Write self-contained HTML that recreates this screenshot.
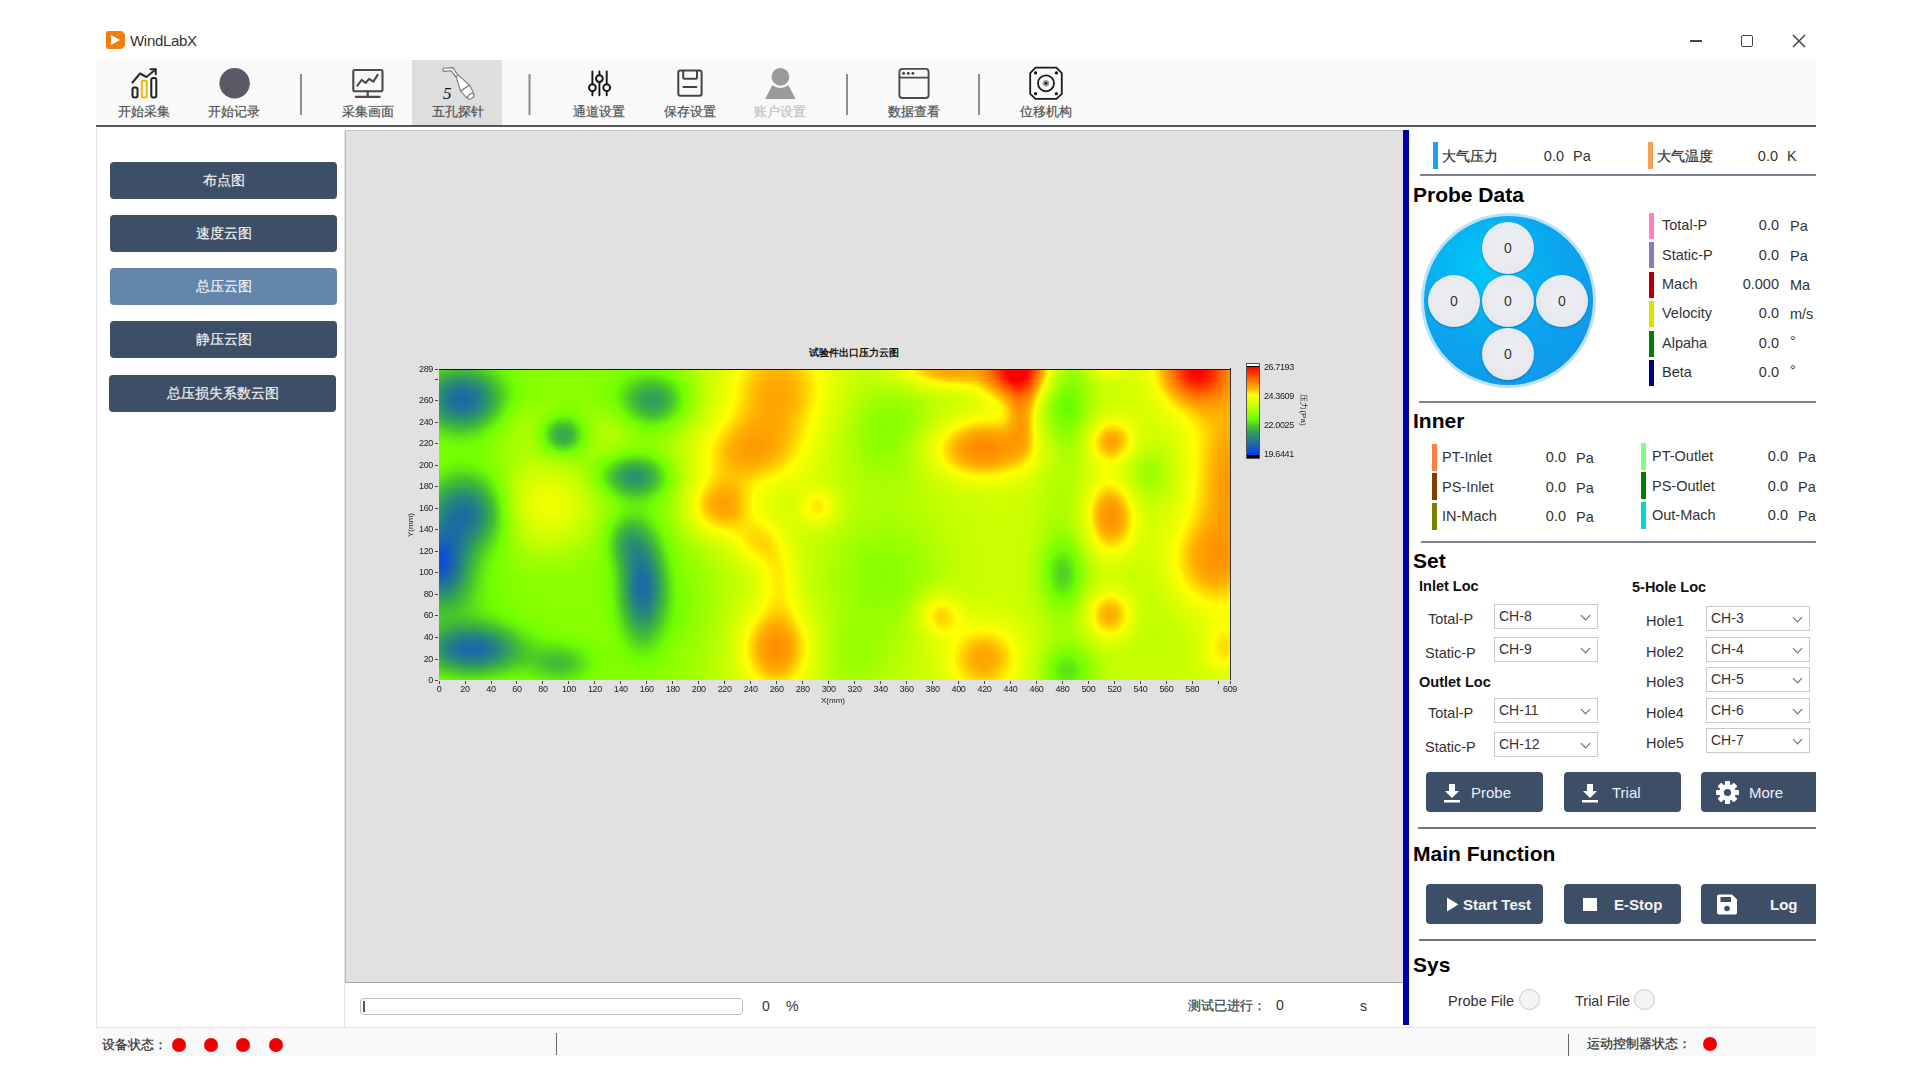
<!DOCTYPE html>
<html><head><meta charset="utf-8">
<style>
*{box-sizing:border-box;margin:0;padding:0}
html,body{width:1920px;height:1080px;overflow:hidden;background:#fff;font-family:"Liberation Sans",sans-serif;color:#222}
.a{position:absolute}
.t{position:absolute;white-space:nowrap;line-height:1}
#win{position:absolute;left:96px;top:24px;width:1720px;height:1032px;background:#fff}
#toolbar{position:absolute;left:96px;top:60px;width:1720px;height:65px;background:#f9f9f9}
#tbline{position:absolute;left:96px;top:125px;width:1720px;height:2px;background:#555}
.tbtxt{position:absolute;top:104.2px;font-size:13px;color:#555;white-space:nowrap;line-height:16px;-webkit-text-stroke:0.25px}
.sep{position:absolute;top:74px;width:2px;height:41px;background:#8a8a8a}
.lbtn{position:absolute;left:110px;width:227px;height:37px;background:#3d4f66;border-radius:4px;color:#f0f0f0;font-size:13.5px;text-align:center;line-height:37px;-webkit-text-stroke:0.2px}
.hdr{position:absolute;font-weight:bold;font-size:21px;color:#000;white-space:nowrap;line-height:1}
.rtxt{position:absolute;font-size:14px;color:#333;white-space:nowrap;line-height:16px}
.bar{position:absolute;width:5px}
.div{position:absolute;height:2px;background:#6e7480}
.combo{position:absolute;width:104px;height:25px;border:1px solid #c9c9c9;background:#fff;font-size:14px;color:#333;line-height:23px;padding-left:4px}
.combo:after{content:"";position:absolute;right:8px;top:7px;width:6px;height:6px;border-right:1.3px solid #666;border-bottom:1.3px solid #666;transform:rotate(45deg)}
.dbtn{position:absolute;height:40px;background:#3d4f66;border-radius:4px;color:#f2f2f2;font-size:15px}
.dot{position:absolute;width:14px;height:14px;border-radius:50%;background:#f00000}
.hole{position:absolute;width:52px;height:52px;border-radius:50%;background:radial-gradient(circle at 50% 45%,#eef0f5 0%,#e6e8ee 70%,#d8dce4 100%);box-shadow:0 1px 2px rgba(0,40,90,.35);font-size:14px;color:#333;text-align:center;line-height:52px}
</style></head><body>
<div id="win"></div>
<!-- title -->
<div class="a" style="left:106px;top:31px;width:19px;height:18px;background:#f07f10;border-radius:2px 5px 5px 2px"></div>
<div class="a" style="left:111px;top:35px;width:0;height:0;border-left:9px solid #fff;border-top:5px solid transparent;border-bottom:5px solid transparent"></div>
<div class="t" style="left:130px;top:33px;font-size:15px;letter-spacing:-0.3px;color:#333">WindLabX</div>
<div class="a" style="left:1690px;top:40px;width:12px;height:2px;background:#444"></div>
<div class="a" style="left:1741px;top:35px;width:12px;height:12px;border:1.6px solid #444;border-radius:2px"></div>
<svg class="a" style="left:1792px;top:34px" width="14" height="14"><path d="M1 1L13 13M13 1L1 13" stroke="#444" stroke-width="1.5"/></svg>

<div id="toolbar"></div>
<div class="a" style="left:412px;top:60px;width:90px;height:65px;background:#dedede"></div>
<div id="tbline"></div>
<!--TB--><svg class="a" style="left:0;top:0" width="1920" height="130" viewBox="0 0 1920 130">
<g fill="none" stroke-linecap="round" stroke-linejoin="round">
<!-- chart icon -->
<rect x="132.5" y="87.5" width="5" height="10" rx="2" stroke="#222" stroke-width="2"/>
<rect x="141.8" y="80.8" width="5" height="16.7" rx="1" stroke="#f5b800" stroke-width="2"/>
<rect x="151.3" y="78" width="5" height="19.5" rx="2" stroke="#222" stroke-width="2"/>
<path d="M132.5 82.5L140 73.5L146.4 77L155.5 69.5" stroke="#2a2a2a" stroke-width="2"/>
<path d="M150.5 69.3H155.8V74.3" stroke="#2a2a2a" stroke-width="2"/>
<!-- monitor -->
<rect x="353.3" y="70" width="29.2" height="21.2" rx="1.5" stroke="#4a4a4a" stroke-width="2.1"/>
<path d="M357.4 85.6L361.7 79.8L365.6 83L369.1 78.8L373.4 81.6L377.6 74.9" stroke="#4a4a4a" stroke-width="2"/>
<path d="M367.7 91.5V96.5M355.7 96.8H379.6" stroke="#4a4a4a" stroke-width="2.2"/>
<!-- sliders -->
<g stroke="#151515" stroke-width="1.9">
<path d="M592.4 71.5V84.3M592.4 91.1V95.2M599.4 71.5V75.2M599.4 82V95.2M606.7 71.5V84.3M606.7 91.1V95.2"/>
<circle cx="592.4" cy="87.7" r="3.4"/><circle cx="599.4" cy="78.6" r="3.4"/><circle cx="606.7" cy="87.7" r="3.4"/>
</g>
<!-- save -->
<g stroke="#444" stroke-width="2">
<rect x="678.3" y="70.6" width="23.3" height="25.1" rx="2"/>
<path d="M683.2 71V77.3Q683.2 78.8 684.7 78.8H695.5Q697 78.8 697 77.3V71"/>
<path d="M683.4 87H696.3"/>
</g>
<!-- window -->
<g stroke="#4a4a4a" stroke-width="1.9">
<rect x="899.4" y="68.9" width="29.2" height="29.1" rx="3"/>
<path d="M899.6 77.6H928.4"/>
</g>
<g fill="#4a4a4a"><circle cx="903.6" cy="73.3" r="1.5"/><circle cx="908.3" cy="73.3" r="1.5"/><circle cx="912.9" cy="73.3" r="1.5"/></g>
<!-- motor -->
<g stroke="#1a1a1a" stroke-width="1.8">
<path d="M1035.6 67.7H1056.4L1061.8 73.1V93.9L1056.4 98.9H1035.6L1030.2 93.9V73.1Z"/>
<circle cx="1046" cy="83.3" r="8"/>
</g>
<circle cx="1046" cy="83.3" r="3.2" fill="#999"/>
<g fill="#111"><circle cx="1046" cy="83.3" r="1.3"/><circle cx="1035.6" cy="72.9" r="1.6"/><circle cx="1056.4" cy="72.9" r="1.6"/><circle cx="1035.6" cy="93.7" r="1.6"/><circle cx="1056.4" cy="93.7" r="1.6"/></g>
</g>
<!-- record -->
<circle cx="234.6" cy="83.3" r="15.2" fill="#5a5966"/>
<!-- user -->
<circle cx="780.4" cy="76.8" r="8.9" fill="#9a9a9a"/>
<path d="M772.2 85.3Q780.4 90.5 788.4 85.3L795.6 99H765.2Z" fill="#9a9a9a"/>
<!-- probe -->
<g stroke="#7a7a7a" stroke-width="1.1" fill="#fff" stroke-linejoin="round">
<path d="M443.5 68.2Q442 69.8 443.6 71.4L451.3 70.8L456 77.2L458.3 75.8L452.8 67.6Z"/>
<path d="M456 76.6L458.6 75.2L469.5 85.3L460.6 91Z"/>
<path d="M460.6 91L469.5 85.3L473.5 92.8L466.5 97.6Z"/>
<ellipse cx="470.8" cy="96.3" rx="3.6" ry="2.2" transform="rotate(-35 470.8 96.3)"/>
</g>
<text x="443" y="98.5" font-family="Liberation Serif" font-style="italic" font-size="17" fill="#111">5</text>
<!-- separators -->
<g fill="#8c8c8c"><rect x="300" y="74" width="2" height="41"/><rect x="528.5" y="74" width="2" height="41"/><rect x="846" y="74" width="2" height="41"/><rect x="978" y="74" width="2" height="41"/></g>
</svg>
<div class="tbtxt" style="left:104px;width:80px;text-align:center">开始采集</div>
<div class="tbtxt" style="left:194px;width:80px;text-align:center">开始记录</div>
<div class="tbtxt" style="left:328px;width:80px;text-align:center">采集画面</div>
<div class="tbtxt" style="left:418px;width:80px;text-align:center">五孔探针</div>
<div class="tbtxt" style="left:559px;width:80px;text-align:center">通道设置</div>
<div class="tbtxt" style="left:650px;width:80px;text-align:center">保存设置</div>
<div class="tbtxt" style="left:740px;width:80px;text-align:center;color:#c4c4c4">账户设置</div>
<div class="tbtxt" style="left:874px;width:80px;text-align:center">数据查看</div>
<div class="tbtxt" style="left:1006px;width:80px;text-align:center">位移机构</div>
<!--/TB-->

<!-- left panel -->
<div class="a" style="left:96px;top:127px;width:1px;height:900px;background:#e6e6e6"></div>
<div class="a" style="left:344px;top:131px;width:1px;height:896px;background:#e4e4e4"></div>
<div class="lbtn" style="top:162px">布点图</div>
<div class="lbtn" style="top:215px">速度云图</div>
<div class="lbtn" style="top:268px;background:#6586ab">总压云图</div>
<div class="lbtn" style="top:321px">静压云图</div>
<div class="lbtn" style="top:375px;left:109px">总压损失系数云图</div>

<!-- center -->
<div class="a" style="left:345px;top:130px;width:1058px;height:853px;background:#e1e1e1;border-left:1px solid #b8b8b8;border-top:1px solid #c4c4c4;border-bottom:1px solid #a8a8a8"></div>
<!--CHART--><div id="chart">
<div class="t" style="left:754px;width:200px;top:348px;text-align:center;font-size:10.3px;font-weight:bold;color:#111">试验件出口压力云图</div>
<canvas id="hm" width="791" height="311" class="a" style="left:439px;top:369px;background:linear-gradient(to right,#4aa868 0%,#80ff00 25%,#c8ff00 45%,#e8ff00 70%,#ffb000 100%)"></canvas>
<div class="a" style="left:439px;top:369px;width:792px;height:1px;background:#111"></div>
<div class="a" style="left:1230px;top:368px;width:1px;height:312px;background:#333"></div>
<div class="a" style="left:435px;top:680.0px;width:3px;height:1px;background:#444"></div>
<div class="t" style="left:380px;width:53px;text-align:right;top:676.0px;font-size:9px;letter-spacing:-0.35px;color:#222">0</div>
<div class="a" style="left:435px;top:658.5px;width:3px;height:1px;background:#444"></div>
<div class="t" style="left:380px;width:53px;text-align:right;top:654.5px;font-size:9px;letter-spacing:-0.35px;color:#222">20</div>
<div class="a" style="left:435px;top:637.0px;width:3px;height:1px;background:#444"></div>
<div class="t" style="left:380px;width:53px;text-align:right;top:633.0px;font-size:9px;letter-spacing:-0.35px;color:#222">40</div>
<div class="a" style="left:435px;top:615.4px;width:3px;height:1px;background:#444"></div>
<div class="t" style="left:380px;width:53px;text-align:right;top:611.4px;font-size:9px;letter-spacing:-0.35px;color:#222">60</div>
<div class="a" style="left:435px;top:593.9px;width:3px;height:1px;background:#444"></div>
<div class="t" style="left:380px;width:53px;text-align:right;top:589.9px;font-size:9px;letter-spacing:-0.35px;color:#222">80</div>
<div class="a" style="left:435px;top:572.4px;width:3px;height:1px;background:#444"></div>
<div class="t" style="left:380px;width:53px;text-align:right;top:568.4px;font-size:9px;letter-spacing:-0.35px;color:#222">100</div>
<div class="a" style="left:435px;top:550.9px;width:3px;height:1px;background:#444"></div>
<div class="t" style="left:380px;width:53px;text-align:right;top:546.9px;font-size:9px;letter-spacing:-0.35px;color:#222">120</div>
<div class="a" style="left:435px;top:529.3px;width:3px;height:1px;background:#444"></div>
<div class="t" style="left:380px;width:53px;text-align:right;top:525.3px;font-size:9px;letter-spacing:-0.35px;color:#222">140</div>
<div class="a" style="left:435px;top:507.8px;width:3px;height:1px;background:#444"></div>
<div class="t" style="left:380px;width:53px;text-align:right;top:503.8px;font-size:9px;letter-spacing:-0.35px;color:#222">160</div>
<div class="a" style="left:435px;top:486.3px;width:3px;height:1px;background:#444"></div>
<div class="t" style="left:380px;width:53px;text-align:right;top:482.3px;font-size:9px;letter-spacing:-0.35px;color:#222">180</div>
<div class="a" style="left:435px;top:464.8px;width:3px;height:1px;background:#444"></div>
<div class="t" style="left:380px;width:53px;text-align:right;top:460.8px;font-size:9px;letter-spacing:-0.35px;color:#222">200</div>
<div class="a" style="left:435px;top:443.3px;width:3px;height:1px;background:#444"></div>
<div class="t" style="left:380px;width:53px;text-align:right;top:439.3px;font-size:9px;letter-spacing:-0.35px;color:#222">220</div>
<div class="a" style="left:435px;top:421.7px;width:3px;height:1px;background:#444"></div>
<div class="t" style="left:380px;width:53px;text-align:right;top:417.7px;font-size:9px;letter-spacing:-0.35px;color:#222">240</div>
<div class="a" style="left:435px;top:400.2px;width:3px;height:1px;background:#444"></div>
<div class="t" style="left:380px;width:53px;text-align:right;top:396.2px;font-size:9px;letter-spacing:-0.35px;color:#222">260</div>
<div class="a" style="left:435px;top:378.7px;width:3px;height:1px;background:#444"></div>
<div class="a" style="left:435px;top:369.0px;width:3px;height:1px;background:#444"></div>
<div class="t" style="left:380px;width:53px;text-align:right;top:365.0px;font-size:9px;letter-spacing:-0.35px;color:#222">289</div>
<div class="a" style="left:438.5px;top:681px;width:1px;height:3px;background:#444"></div>
<div class="t" style="left:419.0px;width:40px;text-align:center;top:685px;font-size:9px;letter-spacing:-0.35px;color:#222">0</div>
<div class="a" style="left:464.5px;top:681px;width:1px;height:3px;background:#444"></div>
<div class="t" style="left:445.0px;width:40px;text-align:center;top:685px;font-size:9px;letter-spacing:-0.35px;color:#222">20</div>
<div class="a" style="left:490.5px;top:681px;width:1px;height:3px;background:#444"></div>
<div class="t" style="left:471.0px;width:40px;text-align:center;top:685px;font-size:9px;letter-spacing:-0.35px;color:#222">40</div>
<div class="a" style="left:516.4px;top:681px;width:1px;height:3px;background:#444"></div>
<div class="t" style="left:496.9px;width:40px;text-align:center;top:685px;font-size:9px;letter-spacing:-0.35px;color:#222">60</div>
<div class="a" style="left:542.4px;top:681px;width:1px;height:3px;background:#444"></div>
<div class="t" style="left:522.9px;width:40px;text-align:center;top:685px;font-size:9px;letter-spacing:-0.35px;color:#222">80</div>
<div class="a" style="left:568.4px;top:681px;width:1px;height:3px;background:#444"></div>
<div class="t" style="left:548.9px;width:40px;text-align:center;top:685px;font-size:9px;letter-spacing:-0.35px;color:#222">100</div>
<div class="a" style="left:594.4px;top:681px;width:1px;height:3px;background:#444"></div>
<div class="t" style="left:574.9px;width:40px;text-align:center;top:685px;font-size:9px;letter-spacing:-0.35px;color:#222">120</div>
<div class="a" style="left:620.3px;top:681px;width:1px;height:3px;background:#444"></div>
<div class="t" style="left:600.8px;width:40px;text-align:center;top:685px;font-size:9px;letter-spacing:-0.35px;color:#222">140</div>
<div class="a" style="left:646.3px;top:681px;width:1px;height:3px;background:#444"></div>
<div class="t" style="left:626.8px;width:40px;text-align:center;top:685px;font-size:9px;letter-spacing:-0.35px;color:#222">160</div>
<div class="a" style="left:672.3px;top:681px;width:1px;height:3px;background:#444"></div>
<div class="t" style="left:652.8px;width:40px;text-align:center;top:685px;font-size:9px;letter-spacing:-0.35px;color:#222">180</div>
<div class="a" style="left:698.3px;top:681px;width:1px;height:3px;background:#444"></div>
<div class="t" style="left:678.8px;width:40px;text-align:center;top:685px;font-size:9px;letter-spacing:-0.35px;color:#222">200</div>
<div class="a" style="left:724.2px;top:681px;width:1px;height:3px;background:#444"></div>
<div class="t" style="left:704.7px;width:40px;text-align:center;top:685px;font-size:9px;letter-spacing:-0.35px;color:#222">220</div>
<div class="a" style="left:750.2px;top:681px;width:1px;height:3px;background:#444"></div>
<div class="t" style="left:730.7px;width:40px;text-align:center;top:685px;font-size:9px;letter-spacing:-0.35px;color:#222">240</div>
<div class="a" style="left:776.2px;top:681px;width:1px;height:3px;background:#444"></div>
<div class="t" style="left:756.7px;width:40px;text-align:center;top:685px;font-size:9px;letter-spacing:-0.35px;color:#222">260</div>
<div class="a" style="left:802.2px;top:681px;width:1px;height:3px;background:#444"></div>
<div class="t" style="left:782.7px;width:40px;text-align:center;top:685px;font-size:9px;letter-spacing:-0.35px;color:#222">280</div>
<div class="a" style="left:828.2px;top:681px;width:1px;height:3px;background:#444"></div>
<div class="t" style="left:808.7px;width:40px;text-align:center;top:685px;font-size:9px;letter-spacing:-0.35px;color:#222">300</div>
<div class="a" style="left:854.1px;top:681px;width:1px;height:3px;background:#444"></div>
<div class="t" style="left:834.6px;width:40px;text-align:center;top:685px;font-size:9px;letter-spacing:-0.35px;color:#222">320</div>
<div class="a" style="left:880.1px;top:681px;width:1px;height:3px;background:#444"></div>
<div class="t" style="left:860.6px;width:40px;text-align:center;top:685px;font-size:9px;letter-spacing:-0.35px;color:#222">340</div>
<div class="a" style="left:906.1px;top:681px;width:1px;height:3px;background:#444"></div>
<div class="t" style="left:886.6px;width:40px;text-align:center;top:685px;font-size:9px;letter-spacing:-0.35px;color:#222">360</div>
<div class="a" style="left:932.1px;top:681px;width:1px;height:3px;background:#444"></div>
<div class="t" style="left:912.6px;width:40px;text-align:center;top:685px;font-size:9px;letter-spacing:-0.35px;color:#222">380</div>
<div class="a" style="left:958.0px;top:681px;width:1px;height:3px;background:#444"></div>
<div class="t" style="left:938.5px;width:40px;text-align:center;top:685px;font-size:9px;letter-spacing:-0.35px;color:#222">400</div>
<div class="a" style="left:984.0px;top:681px;width:1px;height:3px;background:#444"></div>
<div class="t" style="left:964.5px;width:40px;text-align:center;top:685px;font-size:9px;letter-spacing:-0.35px;color:#222">420</div>
<div class="a" style="left:1010.0px;top:681px;width:1px;height:3px;background:#444"></div>
<div class="t" style="left:990.5px;width:40px;text-align:center;top:685px;font-size:9px;letter-spacing:-0.35px;color:#222">440</div>
<div class="a" style="left:1036.0px;top:681px;width:1px;height:3px;background:#444"></div>
<div class="t" style="left:1016.5px;width:40px;text-align:center;top:685px;font-size:9px;letter-spacing:-0.35px;color:#222">460</div>
<div class="a" style="left:1061.9px;top:681px;width:1px;height:3px;background:#444"></div>
<div class="t" style="left:1042.4px;width:40px;text-align:center;top:685px;font-size:9px;letter-spacing:-0.35px;color:#222">480</div>
<div class="a" style="left:1087.9px;top:681px;width:1px;height:3px;background:#444"></div>
<div class="t" style="left:1068.4px;width:40px;text-align:center;top:685px;font-size:9px;letter-spacing:-0.35px;color:#222">500</div>
<div class="a" style="left:1113.9px;top:681px;width:1px;height:3px;background:#444"></div>
<div class="t" style="left:1094.4px;width:40px;text-align:center;top:685px;font-size:9px;letter-spacing:-0.35px;color:#222">520</div>
<div class="a" style="left:1139.9px;top:681px;width:1px;height:3px;background:#444"></div>
<div class="t" style="left:1120.4px;width:40px;text-align:center;top:685px;font-size:9px;letter-spacing:-0.35px;color:#222">540</div>
<div class="a" style="left:1165.9px;top:681px;width:1px;height:3px;background:#444"></div>
<div class="t" style="left:1146.4px;width:40px;text-align:center;top:685px;font-size:9px;letter-spacing:-0.35px;color:#222">560</div>
<div class="a" style="left:1191.8px;top:681px;width:1px;height:3px;background:#444"></div>
<div class="t" style="left:1172.3px;width:40px;text-align:center;top:685px;font-size:9px;letter-spacing:-0.35px;color:#222">580</div>
<div class="a" style="left:1217.8px;top:681px;width:1px;height:3px;background:#444"></div>
<div class="a" style="left:1229.5px;top:681px;width:1px;height:3px;background:#444"></div>
<div class="t" style="left:1210.0px;width:40px;text-align:center;top:685px;font-size:9px;letter-spacing:-0.35px;color:#222">609</div>
<div class="t" style="left:821px;top:697px;font-size:8px;color:#222">X(mm)</div>
<div class="t" style="left:389px;top:521px;font-size:8px;color:#222;transform:rotate(-90deg);transform-origin:22px 4px;width:44px;text-align:center">Y(mm)</div>
<div class="a" style="left:1246px;top:363px;width:14px;height:96px;border:1px solid #555;background:#000"></div>
<div class="a" style="left:1247px;top:364px;width:12px;height:2px;background:#fff"></div>
<div class="a" style="left:1247px;top:367px;width:12px;height:88px;background:linear-gradient(to bottom,#ff0000 0%,#ff6a00 14%,#ffb000 24%,#ffff00 32%,#c0ff00 46%,#70ff00 59%,#44c030 68%,#2a8f70 78%,#1a66aa 89%,#0036ff 100%)"></div>
<div class="t" style="left:1264px;top:362.7px;font-size:9px;letter-spacing:-0.4px;color:#222">26.7193</div>
<div class="t" style="left:1264px;top:392.2px;font-size:9px;letter-spacing:-0.4px;color:#222">24.3609</div>
<div class="t" style="left:1264px;top:420.5px;font-size:9px;letter-spacing:-0.4px;color:#222">22.0025</div>
<div class="t" style="left:1264px;top:449.9px;font-size:9px;letter-spacing:-0.4px;color:#222">19.6441</div>
<div class="t" style="left:1283px;top:406px;font-size:8px;color:#222;transform:rotate(90deg);transform-origin:20px 4px;width:40px;text-align:center">压力(Pa)</div>
</div>
<script>
(function(){
var W=791,H=311;
var c=document.getElementById('hm');var ctx=c.getContext('2d');
var img=ctx.createImageData(W,H);var d=img.data;
var stops=[[0,0,54,255],[0.11,26,102,170],[0.22,42,143,112],[0.32,68,192,48],[0.41,112,255,0],[0.54,192,255,0],[0.68,255,255,0],[0.76,255,176,0],[0.87,255,106,0],[1,255,0,0]];
// blobs: x,y,sx,sy,amp
var B=[
[23,30,28,22,-0.33],[123,66,15,13,-0.22],[214,31,24,18,-0.22],[195,107,24,15,-0.24],
[28,143,28,26,-0.31],[0,195,20,26,-0.34],[203,216,16,38,-0.32],[185,170,14,18,-0.12],[33,280,34,17,-0.32],[121,294,22,14,-0.13],[20,230,30,30,-0.06],
[106,136,34,30,0.23],[86,58,25,20,0.06],[170,65,20,20,0.07],
[337,22,38,40,0.24],[303,84,38,24,0.22],[279,137,22,20,0.29],[318,172,18,18,0.15],[340,208,14,26,0.13],[337,279,24,28,0.31],[379,138,13,13,0.16],
[578,0,24,22,0.36],[583,45,10,25,0.2],[505,0,32,13,0.26],[541,79,36,20,0.33],[672,72,16,15,0.25],[671,147,17,26,0.31],[670,245,16,17,0.28],[668,0,12,6,0.12],
[500,245,15,15,0.2],[544,289,26,24,0.24],[758,0,30,28,0.27],[785,110,28,75,0.21],[792,110,12,40,0.06],[768,195,30,30,0.19],[785,279,15,18,0.14],
[626,32,18,30,-0.14],[623,204,16,24,-0.16],[628,302,20,18,-0.16],[708,105,20,20,-0.10],[624,150,20,150,-0.06],
[450,62,40,40,-0.13],[445,205,45,45,-0.12],[414,290,30,30,-0.08],[245,235,30,40,-0.05],[700,240,50,50,-0.04]
];
var K=0.36;var HOT=[[578,2,18,16,0.18],[756,2,20,18,0.18]];
function base(x,y){
 var s=1/(1+Math.exp(-(x-260)/25));
 return 0.45+0.12*s;
}
for(var y=0;y<H;y++){for(var x=0;x<W;x++){
 var v=base(x,y);var neg=0;var ps=0;
 for(var k=0;k<B.length;k++){var b=B[k];var dx=(x-b[0])/b[2],dy=(y-b[1])/b[3];var e=dx*dx+dy*dy;if(e<14){var g=b[4]*Math.exp(-0.5*e);if(g<0)neg+=g;else ps+=g;}}
 var pos=K*Math.tanh(ps/K);
 v+=neg+pos;
 for(var h=0;h<HOT.length;h++){var q=HOT[h];var ex=(x-q[0])/q[2],ey=(y-q[1])/q[3];v+=q[4]*Math.exp(-0.5*(ex*ex+ey*ey));}
 if(v<0)v=0;if(v>1)v=1;
 var i=1;while(i<stops.length-1&&stops[i][0]<v)i++;
 var a=stops[i-1],bb=stops[i];var f=(v-a[0])/(bb[0]-a[0]);if(f<0)f=0;if(f>1)f=1;
 var p=(y*W+x)*4;
 d[p]=a[1]+(bb[1]-a[1])*f;d[p+1]=a[2]+(bb[2]-a[2])*f;d[p+2]=a[3]+(bb[3]-a[3])*f;d[p+3]=255;
}}
ctx.putImageData(img,0,0);
})();
</script>
<!--/CHART-->


<!-- progress -->
<div class="a" style="left:360px;top:998px;width:383px;height:17px;border:1.5px solid #bcbcbc;border-radius:4px;background:#fff"></div>
<div class="a" style="left:363px;top:1001px;width:2px;height:11px;background:#555"></div>
<div class="t" style="left:762px;top:999px;font-size:14px;color:#333">0</div>
<div class="t" style="left:786px;top:999px;font-size:14px;color:#333">%</div>
<div class="t" style="left:1188px;top:1000px;font-size:12.5px;color:#444;-webkit-text-stroke:0.25px">测试已进行：</div>
<div class="t" style="left:1276px;top:998px;font-size:14px;color:#333">0</div>
<div class="t" style="left:1360px;top:999px;font-size:14px;color:#333">s</div>

<!-- blue line -->
<div class="a" style="left:1403px;top:130px;width:6px;height:895px;background:#0000a8"></div>

<!--RIGHT--><div class="a" style="left:1433px;top:142px;width:5px;height:27px;background:#1aa3e8;"></div>
<div class="t" style="left:1442px;top:150.2px;font-size:13.5px;line-height:13.5px;color:#333;-webkit-text-stroke:0.25px">大气压力</div>
<div class="t" style="left:1464px;width:100px;text-align:right;top:148.8px;font-size:14.5px;line-height:14.5px;color:#333;">0.0</div>
<div class="t" style="left:1573px;top:148.8px;font-size:14.5px;line-height:14.5px;color:#333;">Pa</div>
<div class="a" style="left:1648px;top:142px;width:5px;height:27px;background:#f5a050;"></div>
<div class="t" style="left:1657px;top:150.2px;font-size:13.5px;line-height:13.5px;color:#333;-webkit-text-stroke:0.25px">大气温度</div>
<div class="t" style="left:1678px;width:100px;text-align:right;top:148.8px;font-size:14.5px;line-height:14.5px;color:#333;">0.0</div>
<div class="t" style="left:1787px;top:148.8px;font-size:14.5px;line-height:14.5px;color:#333;">K</div>
<div class="a" style="left:1420px;top:174px;width:396px;height:2px;background:#7c8290;"></div>
<div class="hdr" style="left:1413px;top:184px">Probe Data</div>
<div class="a" style="left:1649px;top:213px;width:5px;height:26px;background:#ff80c0;"></div>
<div class="t" style="left:1662px;top:218.2px;font-size:14.5px;line-height:14.5px;color:#333;">Total-P</div>
<div class="t" style="left:1679px;width:100px;text-align:right;top:218.2px;font-size:14.5px;line-height:14.5px;color:#333;">0.0</div>
<div class="t" style="left:1790px;top:219.2px;font-size:14.5px;line-height:14.5px;color:#333;">Pa</div>
<div class="a" style="left:1649px;top:242px;width:5px;height:26px;background:#8080c0;"></div>
<div class="t" style="left:1662px;top:247.7px;font-size:14.5px;line-height:14.5px;color:#333;">Static-P</div>
<div class="t" style="left:1679px;width:100px;text-align:right;top:247.7px;font-size:14.5px;line-height:14.5px;color:#333;">0.0</div>
<div class="t" style="left:1790px;top:248.7px;font-size:14.5px;line-height:14.5px;color:#333;">Pa</div>
<div class="a" style="left:1649px;top:272px;width:5px;height:26px;background:#b00000;"></div>
<div class="t" style="left:1662px;top:277.1px;font-size:14.5px;line-height:14.5px;color:#333;">Mach</div>
<div class="t" style="left:1679px;width:100px;text-align:right;top:277.1px;font-size:14.5px;line-height:14.5px;color:#333;">0.000</div>
<div class="t" style="left:1790px;top:278.1px;font-size:14.5px;line-height:14.5px;color:#333;">Ma</div>
<div class="a" style="left:1649px;top:301px;width:5px;height:26px;background:#e0e000;"></div>
<div class="t" style="left:1662px;top:306.4px;font-size:14.5px;line-height:14.5px;color:#333;">Velocity</div>
<div class="t" style="left:1679px;width:100px;text-align:right;top:306.4px;font-size:14.5px;line-height:14.5px;color:#333;">0.0</div>
<div class="t" style="left:1790px;top:307.4px;font-size:14.5px;line-height:14.5px;color:#333;">m/s</div>
<div class="a" style="left:1649px;top:331px;width:5px;height:26px;background:#008000;"></div>
<div class="t" style="left:1662px;top:335.9px;font-size:14.5px;line-height:14.5px;color:#333;">Alpaha</div>
<div class="t" style="left:1679px;width:100px;text-align:right;top:335.9px;font-size:14.5px;line-height:14.5px;color:#333;">0.0</div>
<div class="t" style="left:1790px;top:333.9px;font-size:14.5px;line-height:14.5px;color:#333;">°</div>
<div class="a" style="left:1649px;top:360px;width:5px;height:26px;background:#000080;"></div>
<div class="t" style="left:1662px;top:365.2px;font-size:14.5px;line-height:14.5px;color:#333;">Beta</div>
<div class="t" style="left:1679px;width:100px;text-align:right;top:365.2px;font-size:14.5px;line-height:14.5px;color:#333;">0.0</div>
<div class="t" style="left:1790px;top:363.2px;font-size:14.5px;line-height:14.5px;color:#333;">°</div>
<div class="a" style="left:1419px;top:401px;width:397px;height:2px;background:#7c8290;"></div>
<div class="a" style="left:1421px;top:213px;width:175px;height:175px;border-radius:50%;background:#b9e2f8"></div>
<div class="a" style="left:1424px;top:216px;width:169px;height:169px;border-radius:50%;background:radial-gradient(circle at 35% 30%,#00c8f8 0%,#0aa6ee 45%,#1590e8 100%)"></div>
<div class="hole" style="left:1482px;top:222px">0</div>
<div class="hole" style="left:1428px;top:275px">0</div>
<div class="hole" style="left:1482px;top:275px">0</div>
<div class="hole" style="left:1536px;top:275px">0</div>
<div class="hole" style="left:1482px;top:328px">0</div>
<div class="hdr" style="left:1413px;top:410px">Inner</div>
<div class="a" style="left:1432px;top:444px;width:5px;height:27px;background:#ff8040;"></div>
<div class="t" style="left:1442px;top:450.2px;font-size:14.5px;line-height:14.5px;color:#333;">PT-Inlet</div>
<div class="t" style="left:1466px;width:100px;text-align:right;top:450.2px;font-size:14.5px;line-height:14.5px;color:#333;">0.0</div>
<div class="t" style="left:1576px;top:451.2px;font-size:14.5px;line-height:14.5px;color:#333;">Pa</div>
<div class="a" style="left:1432px;top:473px;width:5px;height:27px;background:#804000;"></div>
<div class="t" style="left:1442px;top:479.6px;font-size:14.5px;line-height:14.5px;color:#333;">PS-Inlet</div>
<div class="t" style="left:1466px;width:100px;text-align:right;top:479.6px;font-size:14.5px;line-height:14.5px;color:#333;">0.0</div>
<div class="t" style="left:1576px;top:480.6px;font-size:14.5px;line-height:14.5px;color:#333;">Pa</div>
<div class="a" style="left:1432px;top:503px;width:5px;height:27px;background:#808000;"></div>
<div class="t" style="left:1442px;top:508.9px;font-size:14.5px;line-height:14.5px;color:#333;">IN-Mach</div>
<div class="t" style="left:1466px;width:100px;text-align:right;top:508.9px;font-size:14.5px;line-height:14.5px;color:#333;">0.0</div>
<div class="t" style="left:1576px;top:509.9px;font-size:14.5px;line-height:14.5px;color:#333;">Pa</div>
<div class="a" style="left:1641px;top:443px;width:5px;height:27px;background:#80ff80;"></div>
<div class="t" style="left:1652px;top:449.2px;font-size:14.5px;line-height:14.5px;color:#333;">PT-Outlet</div>
<div class="t" style="left:1688px;width:100px;text-align:right;top:449.2px;font-size:14.5px;line-height:14.5px;color:#333;">0.0</div>
<div class="t" style="left:1798px;top:450.2px;font-size:14.5px;line-height:14.5px;color:#333;">Pa</div>
<div class="a" style="left:1641px;top:472px;width:5px;height:27px;background:#008000;"></div>
<div class="t" style="left:1652px;top:478.6px;font-size:14.5px;line-height:14.5px;color:#333;">PS-Outlet</div>
<div class="t" style="left:1688px;width:100px;text-align:right;top:478.6px;font-size:14.5px;line-height:14.5px;color:#333;">0.0</div>
<div class="t" style="left:1798px;top:479.6px;font-size:14.5px;line-height:14.5px;color:#333;">Pa</div>
<div class="a" style="left:1641px;top:502px;width:5px;height:27px;background:#00d8d8;"></div>
<div class="t" style="left:1652px;top:507.9px;font-size:14.5px;line-height:14.5px;color:#333;">Out-Mach</div>
<div class="t" style="left:1688px;width:100px;text-align:right;top:507.9px;font-size:14.5px;line-height:14.5px;color:#333;">0.0</div>
<div class="t" style="left:1798px;top:508.9px;font-size:14.5px;line-height:14.5px;color:#333;">Pa</div>
<div class="a" style="left:1421px;top:541px;width:395px;height:2px;background:#7c8290;"></div>
<div class="hdr" style="left:1413px;top:550px">Set</div>
<div class="t" style="left:1419px;top:578.8px;font-size:14.5px;line-height:14.5px;color:#111;font-weight:bold">Inlet Loc</div>
<div class="t" style="left:1632px;top:579.8px;font-size:14.5px;line-height:14.5px;color:#111;font-weight:bold">5-Hole Loc</div>
<div class="t" style="left:1428px;top:611.8px;font-size:14.5px;line-height:14.5px;color:#333;">Total-P</div>
<div class="t" style="left:1425px;top:645.8px;font-size:14.5px;line-height:14.5px;color:#333;">Static-P</div>
<div class="combo" style="left:1494px;top:604px">CH-8</div>
<div class="combo" style="left:1494px;top:637px">CH-9</div>
<div class="t" style="left:1419px;top:674.8px;font-size:14.5px;line-height:14.5px;color:#111;font-weight:bold">Outlet Loc</div>
<div class="t" style="left:1428px;top:705.8px;font-size:14.5px;line-height:14.5px;color:#333;">Total-P</div>
<div class="t" style="left:1425px;top:739.8px;font-size:14.5px;line-height:14.5px;color:#333;">Static-P</div>
<div class="combo" style="left:1494px;top:698px">CH-11</div>
<div class="combo" style="left:1494px;top:732px">CH-12</div>
<div class="t" style="left:1646px;top:614.2px;font-size:14.5px;line-height:14.5px;color:#333;">Hole1</div>
<div class="combo" style="left:1706px;top:606px">CH-3</div>
<div class="t" style="left:1646px;top:644.8px;font-size:14.5px;line-height:14.5px;color:#333;">Hole2</div>
<div class="combo" style="left:1706px;top:637px">CH-4</div>
<div class="t" style="left:1646px;top:675.2px;font-size:14.5px;line-height:14.5px;color:#333;">Hole3</div>
<div class="combo" style="left:1706px;top:667px">CH-5</div>
<div class="t" style="left:1646px;top:705.8px;font-size:14.5px;line-height:14.5px;color:#333;">Hole4</div>
<div class="combo" style="left:1706px;top:698px">CH-6</div>
<div class="t" style="left:1646px;top:736.2px;font-size:14.5px;line-height:14.5px;color:#333;">Hole5</div>
<div class="combo" style="left:1706px;top:728px">CH-7</div>
<div class="dbtn" style="left:1426px;top:772px;width:117px;height:40px;overflow:hidden;"><svg class="a" style="left:17px;top:11px" width="18" height="20" viewBox="0 0 18 20"><path d="M6 1H12V8H16L9 15L2 8H6Z" fill="#fff"/><rect x="1" y="17" width="16" height="2.5" fill="#fff"/></svg><div class="t" style="left:45px;top:13px;font-size:15px;color:#eef">Probe</div></div>
<div class="dbtn" style="left:1564px;top:772px;width:117px;height:40px;overflow:hidden;"><svg class="a" style="left:17px;top:11px" width="18" height="20" viewBox="0 0 18 20"><path d="M6 1H12V8H16L9 15L2 8H6Z" fill="#fff"/><rect x="1" y="17" width="16" height="2.5" fill="#fff"/></svg><div class="t" style="left:48px;top:13px;font-size:15px;color:#eef">Trial</div></div>
<div class="dbtn" style="left:1701px;top:772px;width:115px;height:40px;overflow:hidden;border-radius:4px 0 0 4px"><svg class="a" style="left:14px;top:8px" width="25" height="25" viewBox="-12.5 -12.5 25 25"><g fill="#fff"><rect x="-2.6" y="-11.5" width="5.2" height="6" rx="1" transform="rotate(0)"/><rect x="-2.6" y="-11.5" width="5.2" height="6" rx="1" transform="rotate(45)"/><rect x="-2.6" y="-11.5" width="5.2" height="6" rx="1" transform="rotate(90)"/><rect x="-2.6" y="-11.5" width="5.2" height="6" rx="1" transform="rotate(135)"/><rect x="-2.6" y="-11.5" width="5.2" height="6" rx="1" transform="rotate(180)"/><rect x="-2.6" y="-11.5" width="5.2" height="6" rx="1" transform="rotate(225)"/><rect x="-2.6" y="-11.5" width="5.2" height="6" rx="1" transform="rotate(270)"/><rect x="-2.6" y="-11.5" width="5.2" height="6" rx="1" transform="rotate(315)"/><circle r="8.2"/></g><circle r="3.6" fill="#3d4f66"/></svg><div class="t" style="left:48px;top:13px;font-size:15px;color:#eef">More</div></div>
<div class="a" style="left:1418px;top:827px;width:398px;height:2px;background:#6e7480;"></div>
<div class="hdr" style="left:1413px;top:843px">Main Function</div>
<div class="dbtn" style="left:1426px;top:884px;width:117px;height:40px;overflow:hidden;"><svg class="a" style="left:20px;top:13px" width="13" height="15"><path d="M1 0.5L12.5 7.5L1 14.5Z" fill="#fff"/></svg><div class="t" style="left:37px;top:13px;font-size:15px;font-weight:bold;color:#f4f4f4">Start Test</div></div>
<div class="dbtn" style="left:1564px;top:884px;width:117px;height:40px;overflow:hidden;"><div class="a" style="left:18.5px;top:13.5px;width:14px;height:13.5px;background:#fff"></div><div class="t" style="left:50px;top:13px;font-size:15px;font-weight:bold;color:#f4f4f4">E-Stop</div></div>
<div class="dbtn" style="left:1701px;top:884px;width:115px;height:40px;overflow:hidden;border-radius:4px 0 0 4px"><svg class="a" style="left:15px;top:10px" width="22" height="21" viewBox="0 0 22 21"><path d="M1 2.5Q1 0.5 3 0.5H16L21 5.5V18.5Q21 20.5 19 20.5H3Q1 20.5 1 18.5Z" fill="#fff"/><rect x="4.5" y="3" width="10.5" height="5" fill="#3d4f66"/><circle cx="11" cy="14.5" r="2.8" fill="#3d4f66"/></svg><div class="t" style="left:69px;top:13px;font-size:15px;font-weight:bold;color:#f4f4f4">Log</div></div>
<div class="a" style="left:1419px;top:939px;width:397px;height:2px;background:#6e7480;"></div>
<div class="hdr" style="left:1413px;top:954px">Sys</div>
<div class="t" style="left:1448px;top:993.8px;font-size:14.5px;line-height:14.5px;color:#333;">Probe File</div>
<div class="a" style="left:1519px;top:989px;width:21px;height:21px;border-radius:50%;border:1.5px solid #c8c8c8;background:#f4f4f4"></div>
<div class="t" style="left:1575px;top:993.8px;font-size:14.5px;line-height:14.5px;color:#333;">Trial File</div>
<div class="a" style="left:1634px;top:989px;width:21px;height:21px;border-radius:50%;border:1.5px solid #c8c8c8;background:#f4f4f4"></div><!--/RIGHT-->

<!-- status bar -->
<div class="a" style="left:96px;top:1027px;width:1720px;height:29px;background:#f9f9f9;border-top:1px solid #e6e6e6"></div>
<div class="t" style="left:102px;top:1039px;font-size:12.5px;color:#333;-webkit-text-stroke:0.25px">设备状态：</div>
<div class="dot" style="left:172px;top:1038px"></div>
<div class="dot" style="left:204px;top:1038px"></div>
<div class="dot" style="left:236px;top:1038px"></div>
<div class="dot" style="left:269px;top:1038px"></div>
<div class="a" style="left:556px;top:1033px;width:1px;height:22px;background:#666"></div>
<div class="a" style="left:1568px;top:1034px;width:1px;height:22px;background:#666"></div>
<div class="t" style="left:1587px;top:1038px;font-size:12.5px;color:#333;-webkit-text-stroke:0.25px">运动控制器状态：</div>
<div class="dot" style="left:1703px;top:1037px"></div>
</body></html>
